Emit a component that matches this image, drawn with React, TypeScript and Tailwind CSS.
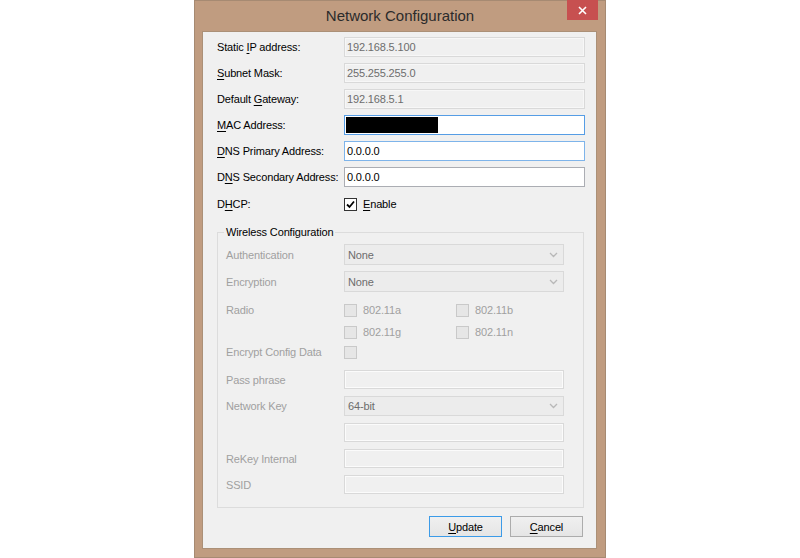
import React from "react";

const Key = ({ children }: { children: React.ReactNode }) => (
  <span className="underline underline-offset-[2px]">{children}</span>
);

const ReadOnlyField = ({ value }: { value: string }) => (
  <div className="h-[20px] border border-[#d9d9d9] bg-[#f0f0f0] shadow-[inset_0_0_0_1px_#f7f7f7] pl-[2px] flex items-center text-[#6d6d6d]">
    {value}
  </div>
);

const TextField = ({ value, focus }: { value: string; focus?: boolean }) => (
  <div
    className={`h-[20px] border bg-white pl-[2px] flex items-center text-black ${
      focus ? "border-[#7eb4ea]" : "border-[#abadb3]"
    }`}
  >
    {value}
  </div>
);

const DisabledInput = () => (
  <div className="h-[19px] border border-[#d9d9d9] bg-[#f0f0f0] shadow-[inset_0_0_0_1px_#fbfbfb]" />
);

const DisabledSelect = ({ value, h = "h-[21px]" }: { value: string; h?: string }) => (
  <div
    className={`${h} border border-[#d9d9d9] bg-[#ececec] pl-[3px] pr-[5px] flex items-center justify-between text-[#6d6d6d]`}
  >
    <span>{value}</span>
    <svg width="9" height="6" viewBox="0 0 9 6">
      <path d="M1 1 L4.5 4.5 L8 1" fill="none" stroke="#b8b8b8" strokeWidth="1.3" />
    </svg>
  </div>
);

const DisabledBox = () => (
  <div className="w-[13px] h-[13px] border border-[#c9c9c9] bg-[#e6e6e6] shrink-0" />
);

const Row = ({
  label,
  children,
  className = "",
}: {
  label: React.ReactNode;
  children: React.ReactNode;
  className?: string;
}) => (
  <div className={`flex items-center ${className}`}>
    <div className="w-[127px] shrink-0">{label}</div>
    <div className="flex-1">{children}</div>
  </div>
);

const GroupRow = ({
  label,
  children,
  className = "",
}: {
  label?: React.ReactNode;
  children: React.ReactNode;
  className?: string;
}) => (
  <div className={`flex items-center ${className}`}>
    <div className="w-[118px] shrink-0 text-[#a0a0a0]">{label}</div>
    <div className="w-[220px]">{children}</div>
  </div>
);

const Button = ({ children, primary }: { children: React.ReactNode; primary?: boolean }) => (
  <div
    className={`w-[73px] h-[21px] border flex items-center justify-center bg-gradient-to-b from-[#f0f0f0] to-[#e5e5e5] text-black ${
      primary ? "border-[#3c9be8]" : "border-[#acacac]"
    }`}
  >
    {children}
  </div>
);

export default function App() {
  return (
    <div className="w-[800px] h-[558px] bg-white flex justify-center font-['Liberation_Sans',Arial,sans-serif] text-[11px] leading-[14px] tracking-[-0.15px]">
      <div className="w-[412px] h-[558px] bg-[#c09c80] border border-[#a68a72] flex flex-col">
        <div className="relative h-[30px] flex items-center justify-center">
          <span className="text-[15px] tracking-normal text-[#2b2b2b]">Network Configuration</span>
          <div className="absolute -top-px right-[7px] w-[31px] h-[20px] bg-[#c75050] flex items-center justify-center">
            <svg width="9" height="9" viewBox="0 0 9 9">
              <path d="M1 1 L8 8 M8 1 L1 8" stroke="white" strokeWidth="1.6" />
            </svg>
          </div>
        </div>

        <div className="ml-[7px] mr-[8px] mb-[8px] flex-1 border border-[#ab9077] bg-[#f0f0f0] pt-[5px] pl-[14px] pr-[11px] text-black">
          <div className="flex flex-col gap-[6px]">
            <Row label={<>Static <Key>I</Key>P address:</>}>
              <ReadOnlyField value="192.168.5.100" />
            </Row>
            <Row label={<><Key>S</Key>ubnet Mask:</>}>
              <ReadOnlyField value="255.255.255.0" />
            </Row>
            <Row label={<>Default <Key>G</Key>ateway:</>}>
              <ReadOnlyField value="192.168.5.1" />
            </Row>
            <Row label={<><Key>M</Key>AC Address:</>}>
              <div className="h-[20px] border border-[#569de5] bg-white p-px">
                <div className="w-[92px] h-full bg-black" />
              </div>
            </Row>
            <Row label={<><Key>D</Key>NS Primary Address:</>}>
              <TextField value="0.0.0.0" focus />
            </Row>
            <Row label={<>D<Key>N</Key>S Secondary Address:</>}>
              <TextField value="0.0.0.0" />
            </Row>
            <Row className="h-[20px] mt-[1px]" label={<>D<Key>H</Key>CP:</>}>
              <div className="flex items-center gap-[6px]">
                <div className="w-[13px] h-[13px] border border-[#333] bg-white flex items-center justify-center">
                  <svg width="11" height="11" viewBox="0 0 11 11">
                    <path d="M2 5.5 L4.5 8 L9 2.5" fill="none" stroke="black" strokeWidth="1.8" />
                  </svg>
                </div>
                <span>
                  <Key>E</Key>nable
                </span>
              </div>
            </Row>
          </div>

          <fieldset className="mt-[11px] mr-[1px] border border-[#dcdcdc]">
            <legend className="ml-[6px] px-[2px] leading-[14px] text-black">Wireless Configuration</legend>
            <div className="pl-[8px] pt-[5px] pb-[13px] flex flex-col">
              <GroupRow label="Authentication">
                <DisabledSelect value="None" />
              </GroupRow>
              <GroupRow className="mt-[6px]" label="Encryption">
                <DisabledSelect value="None" />
              </GroupRow>
              <GroupRow className="mt-[8px] h-[20px]" label="Radio">
                <div className="flex text-[#a0a0a0]">
                  <div className="w-[112px] flex items-center gap-[6px]">
                    <DisabledBox />
                    <span>802.11a</span>
                  </div>
                  <div className="flex items-center gap-[6px]">
                    <DisabledBox />
                    <span>802.11b</span>
                  </div>
                </div>
              </GroupRow>
              <GroupRow className="mt-[2px] h-[20px]">
                <div className="flex text-[#a0a0a0]">
                  <div className="w-[112px] flex items-center gap-[6px]">
                    <DisabledBox />
                    <span>802.11g</span>
                  </div>
                  <div className="flex items-center gap-[6px]">
                    <DisabledBox />
                    <span>802.11n</span>
                  </div>
                </div>
              </GroupRow>
              <GroupRow className="h-[20px]" label="Encrypt Config Data">
                <DisabledBox />
              </GroupRow>
              <GroupRow className="mt-[8px]" label="Pass phrase">
                <DisabledInput />
              </GroupRow>
              <GroupRow className="mt-[7px]" label="Network Key">
                <DisabledSelect value="64-bit" h="h-[20px]" />
              </GroupRow>
              <GroupRow className="mt-[7px]">
                <DisabledInput />
              </GroupRow>
              <GroupRow className="mt-[7px]" label="ReKey Internal">
                <DisabledInput />
              </GroupRow>
              <GroupRow className="mt-[7px]" label="SSID">
                <DisabledInput />
              </GroupRow>
            </div>
          </fieldset>

          <div className="mt-[8px] mr-[2px] flex justify-end gap-[8px]">
            <Button primary>
              <span>
                <Key>U</Key>pdate
              </span>
            </Button>
            <Button>
              <span>
                <Key>C</Key>ancel
              </span>
            </Button>
          </div>
        </div>
      </div>
    </div>
  );
}
